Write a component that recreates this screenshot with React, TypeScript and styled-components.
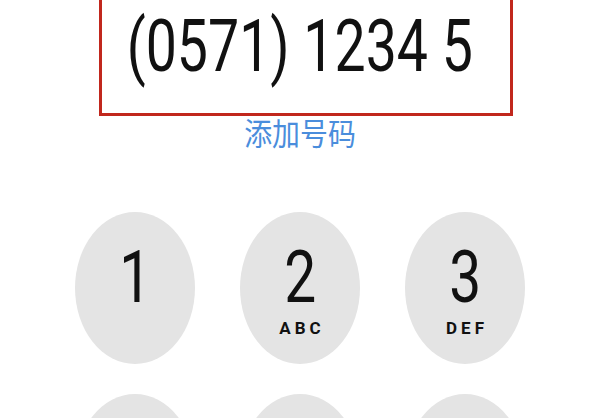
import React from 'react';
import styled, { createGlobalStyle } from 'styled-components';

const GlobalStyle = createGlobalStyle`
  html, body {
    margin: 0;
    padding: 0;
    background: #ffffff;
    font-family: Roboto, 'Noto Sans CJK SC', sans-serif;
    overflow: hidden;
  }
`;

// Whole dialer screen
const Screen = styled.div`
  width: 600px;
  height: 418px;
  display: flex;
  flex-direction: column;
  overflow: hidden;
  & > * {
    flex-shrink: 0;
  }
`;

// Red highlight box around the number display
const NumberBox = styled.div`
  margin: -40px 0 0 99px;
  width: 414px;
  height: 156px;
  border: 3px solid #c1271d;
  display: flex;
  align-items: flex-end;
  justify-content: center;
  padding-bottom: 30px;
  box-sizing: border-box;
`;

const NumberText = styled.span`
  display: inline-block;
  font-family: Roboto, sans-serif;
  font-size: 72px;
  line-height: 1;
  color: #111;
  transform: scaleX(0.77);
  white-space: nowrap;
  margin-left: -12px;
`;

const AddNumber = styled.div`
  align-self: center;
  margin-top: -2px;
  font-family: 'Noto Sans CJK SC', sans-serif;
  font-size: 31px;
  line-height: 36px;
  color: #4a8ddc;
  transform: scaleX(0.9);
`;

const Keypad = styled.div`
  display: grid;
  grid-template-columns: repeat(3, 120px);
  column-gap: 45px;
  row-gap: 30px;
  margin: 62px 0 0 75px;
`;

const Key = styled.div`
  width: 120px;
  height: 152px;
  border-radius: 50%;
  background: #e4e4e4;
  display: flex;
  flex-direction: column;
  align-items: center;
  padding-top: 30px;
  box-sizing: border-box;
`;

const Digit = styled.span`
  display: inline-block;
  font-family: Roboto, sans-serif;
  font-size: 72px;
  line-height: 72px;
  color: #111;
  transform: scaleX(0.79);
`;

const Letters = styled.span`
  height: 20px;
  margin-top: 4px;
  font-family: Roboto, sans-serif;
  font-weight: 700;
  font-size: 17px;
  letter-spacing: 4px;
  padding-left: 4px;
  color: #111;
`;

const keys = [
  { d: '1', l: '' },
  { d: '2', l: 'ABC' },
  { d: '3', l: 'DEF' },
  { d: '4', l: 'GHI' },
  { d: '5', l: 'JKL' },
  { d: '6', l: 'MNO' },
];

const App: React.FC = () => {
  return (
    <Screen>
      <GlobalStyle />
      <NumberBox>
        <NumberText>(0571) 1234 5</NumberText>
      </NumberBox>
      <AddNumber>添加号码</AddNumber>
      <Keypad>
        {keys.map((k) => (
          <Key key={k.d}>
            <Digit>{k.d}</Digit>
            <Letters>{k.l}</Letters>
          </Key>
        ))}
      </Keypad>
    </Screen>
  );
};

export default App;
